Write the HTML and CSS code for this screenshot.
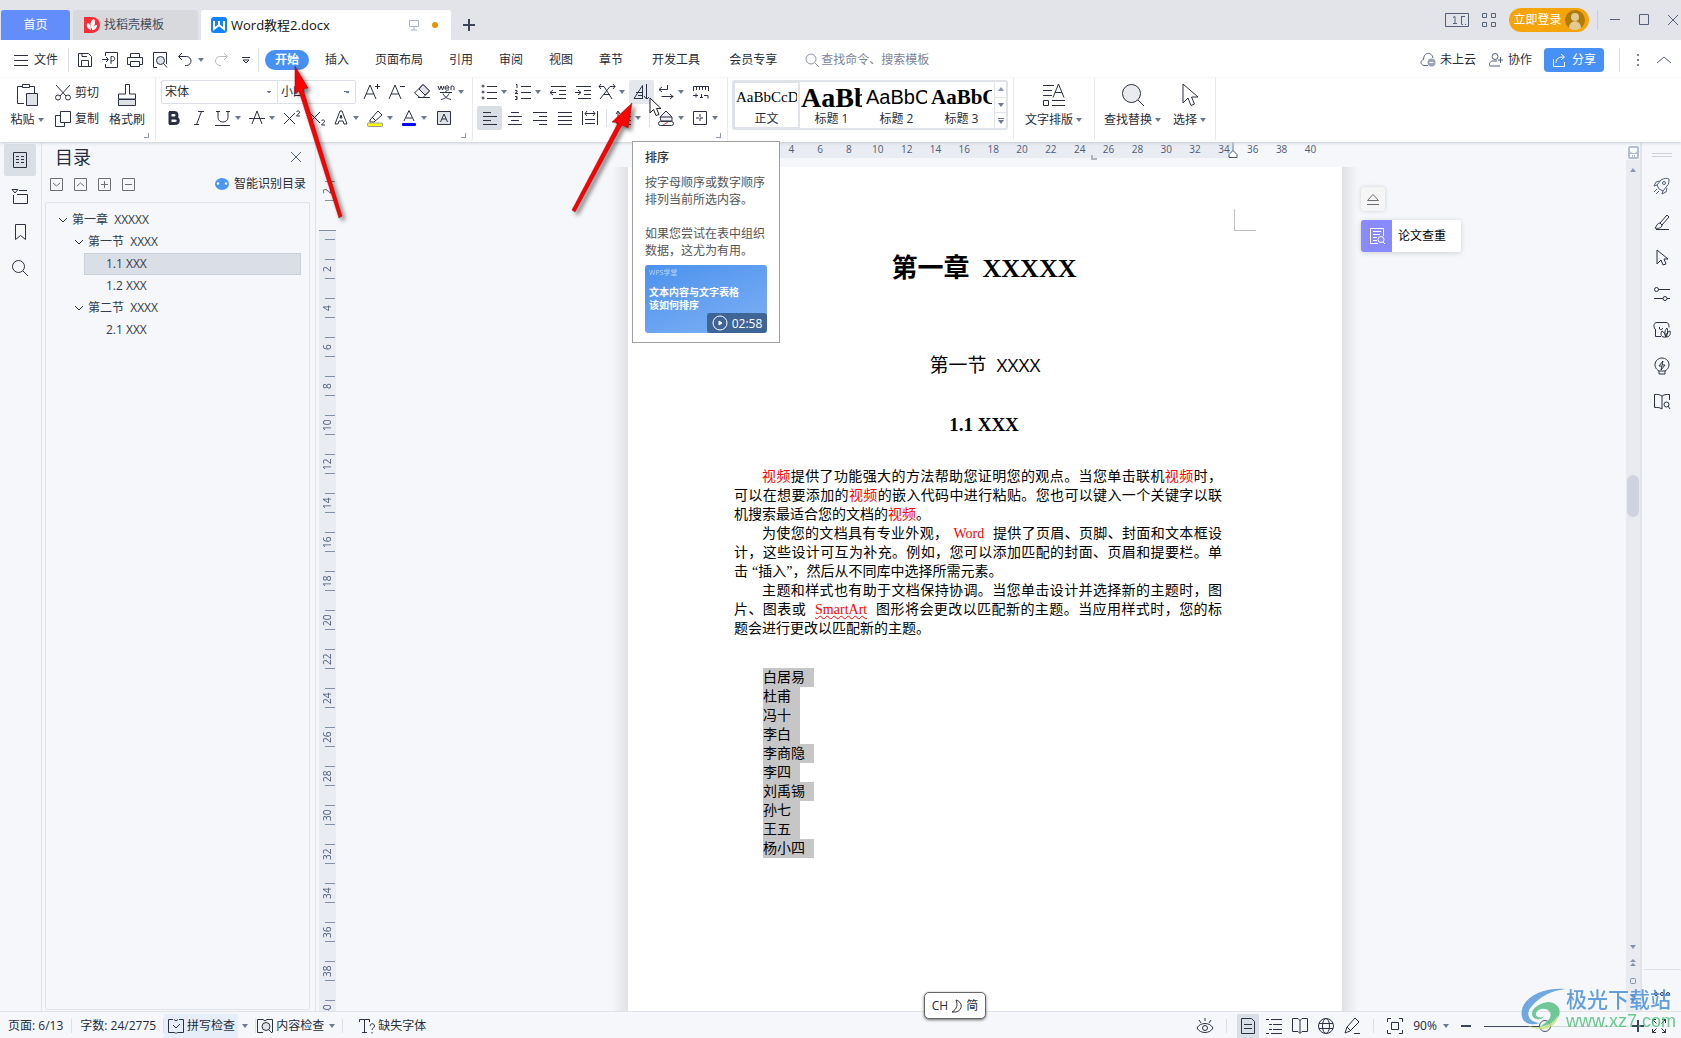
FILE: index.html
```html
<!DOCTYPE html>
<html lang="zh-CN">
<head>
<meta charset="utf-8">
<title>Word教程2.docx</title>
<link rel="stylesheet" href="styles.css">
</head>
<body>
<svg class="defs" aria-hidden="true">
  <symbol id="x2" viewBox="0 0 18 18"><path d="M1 4l11 11M12 4L1 15M13.500 3c1-2 3.500-1 3 .7L13.500 7H17"/></symbol>
  <symbol id="sub2" viewBox="0 0 18 18"><path d="M1 3l11 11M12 3L1 14M13.500 12c1-2 3.500-1 3 .7L13.500 16H17"/></symbol>
  <symbol id="cursor" viewBox="0 0 18 24"><path d="M2 1v19l5-5 3 7.500 3.500-1.500-3-7H17z"/></symbol>
</svg>

<header class="titlebar">
  <nav class="tabs">
    <button class="tab home">首页</button>
    <button class="tab docer"><svg width="16" height="16" viewBox="0 0 16 16"><path d="M0 0h8a8 8 0 010 16H0z" fill="#fa2c37"/><path d="M7 13C2 11 2 7 4 6c2 1 3 3 3 7zM8 12C5 7 7 3 10 2c2 3 1 7-2 10zM8 13c0-3 3-5 5-5 0 3-2 5-5 5z" fill="#fff"/></svg>找稻壳模板</button>
    <button class="tab doc"><svg width="16" height="16" viewBox="0 0 16 16"><rect width="16" height="16" rx="3" fill="#1483fb"/><path d="M3 4v8l5-4 5 4V4M8 4v4" fill="none" stroke="#fff" stroke-width="2"/></svg><span class="grow">Word教程2.docx</span>
      <svg class="ln pale" width="12" height="12"><path d="M1.500 1.500h9v6h-9zM6 8v3M3 11h6"/></svg><i class="dot"></i></button>
    <button class="plus" aria-label="新建"><svg class="ln thick" width="12" height="12"><path d="M6 0v12M0 6h12"/></svg></button>
  </nav>
  <div class="winctl">
    <button aria-label="分屏"><svg class="ln slate" width="24" height="14"><path d="M.5.500h23v13H.5zM16.500 3v8.500M17 3.500h3M17 11.500h1M20 11.500h1M8 4.500l2-1v7M8 10.500h4"/></svg></button>
    <button aria-label="应用"><svg class="ln slate" width="14" height="14"><path d="M.5.500h4v4h-4zM9.500.500h4v4h-4zM.5 9.500h4v4h-4zM9.500 9.500h4v4h-4z"/></svg></button>
    <button class="login">立即登录<svg width="20" height="20" viewBox="0 0 20 20"><circle cx="10" cy="10" r="10" fill="#b07b08"/><circle cx="10" cy="7" r="4" fill="#e2c891"/><path d="M4 18c0-9 12-9 12 0-4 3-8 3-12 0z" fill="#e2c891"/></svg></button>
    <i class="vsep"></i>
    <button aria-label="最小化"><svg class="ln slate" width="12" height="12"><path d="M1 5.500h10"/></svg></button>
    <button aria-label="最大化"><svg class="ln slate" width="12" height="12"><path d="M1.500.500h9v10h-9z"/></svg></button>
    <button aria-label="关闭"><svg class="ln slate" width="12" height="12"><path d="M1 1l10 10M11 1L1 11"/></svg></button>
  </div>
</header>

<nav class="menubar">
  <button class="file"><svg class="ln" width="14" height="12"><path d="M0 1.500h14M0 6.500h14M0 11.500h14"/></svg>文件</button>
  <i class="vsep"></i>
  <div class="quick">
    <button aria-label="保存"><svg class="ln" width="16" height="16"><path d="M1.500 1.500h10l3 3v10h-13zM4.500 14V8.500h7V14M5 1.500v3h5"/></svg></button>
    <button aria-label="输出PDF"><svg class="ln" width="16" height="16"><path d="M3.500 4V.500h12v15h-12V12M0 7.500h6M4 5l2.500 2.500L4 10M9 12V4.500c5-1 5 5 0 4.500"/></svg></button>
    <button aria-label="打印"><svg class="ln" width="16" height="16"><path d="M3.500 5V1.500h9V5M3 12.500H.5v-7h15v7H13M3.500 9.500h9v5h-9z"/></svg></button>
    <button aria-label="打印预览"><svg class="ln" width="16" height="16"><path d="M5 15.500H1.500V.500h13V12"/><circle cx="8.500" cy="8.500" r="4" fill="#dfe2e7"/><path d="M11.500 11.500l3.500 4"/></svg></button>
    <button class="dd" aria-label="撤销"><svg class="ln" width="16" height="16"><path d="M5 1L1.500 4.500 5 8M2 4.500h7.500a4.500 4.500 0 010 9H8"/></svg><i class="caret"></i></button>
    <button aria-label="恢复"><svg class="ln faint" width="16" height="16"><path d="M11 1l3.500 3.500L11 8M14 4.500H7a4.500 4.500 0 000 9h1"/></svg></button>
    <button aria-label="更多"><svg class="ln" width="8" height="8"><path d="M0 1.500h8M1 4l3 3 3-3z"/></svg></button>
  </div>
  <i class="vsep"></i>
  <div class="menus">
    <button class="on">开始</button><button>插入</button><button>页面布局</button><button>引用</button><button>审阅</button><button>视图</button><button>章节</button><button class="far">开发工具</button><button class="far">会员专享</button>
  </div>
  <label class="search"><svg class="ln" width="14" height="14"><circle cx="6" cy="6" r="5"/><path d="M10 10l4 4"/></svg><input type="text" placeholder="查找命令、搜索模板"></label>
  <div class="share">
    <button><svg class="ln slate" width="16" height="16"><path d="M8 13.500H4c-4-1-4-5-.500-6C4-1 12 0 13 6"/><circle cx="11.500" cy="10.500" r="4" fill="#9ca3b5" stroke="none"/><path d="M9.500 10.500h4" stroke="#fff"/></svg>未上云</button>
    <button><svg class="ln slate" width="16" height="16"><circle cx="7" cy="4.500" r="3"/><path d="M9 9H5c-4 0-4 5-3 5h10M12.500 5v6M10 8h5"/></svg>协作</button>
    <button class="blue"><svg class="ln" width="14" height="14"><path d="M1.500 6v7.500h11V9M4 10c0-5 3-6 8-6M9 1l3.500 3L9 7"/></svg>分享</button>
    <i class="vsep"></i>
    <button aria-label="更多"><svg width="3" height="14"><path d="M0 1h2v2H0zM0 6h2v2H0zM0 11h2v2H0z" fill="#7d8699"/></svg></button>
    <button aria-label="收起"><svg class="ln slate" width="14" height="10"><path d="M0 8l7-6 7 6"/></svg></button>
  </div>
</nav>

<section class="ribbon">
  <div class="group clip">
    <button class="tall paste"><svg class="ln" width="24" height="24"><path d="M7 3.500H2.500v17H9M15 3.500h4.500V10M7.500 1.500h7v3h-7z"/><path d="M11.500 10.500h11v12h-11z" fill="#dfe2e7"/></svg><span>粘贴<i class="caret"></i></span></button>
    <div class="rows">
      <button class="wide"><svg class="ln" width="16" height="16"><path d="M1 0l10 11M15 0L5 11"/><circle cx="3" cy="12.500" r="2.500"/><circle cx="13" cy="12.500" r="2.500"/></svg>剪切</button>
      <button class="wide"><svg class="ln" width="16" height="16"><path d="M5.500.500h10v11h-10zM5 4.500H.5v11h9V12"/></svg>复制</button>
    </div>
    <button class="tall brush"><svg class="ln" width="24" height="24"><path d="M10.500 1.500h4V11h6v5h-17v-5h7z"/><path d="M3.500 16.500h17v6h-17z" fill="#dfe2e7"/></svg><span>格式刷</span></button>
    <i class="corner"></i>
  </div>
  <div class="group fonts">
    <div class="rows">
      <div class="row">
        <div class="combo"><select class="font" aria-label="字体"><option>宋体</option></select><select class="size" aria-label="字号"><option>小四</option></select></div>
        <button aria-label="增大字号"><svg class="ln" width="18" height="18"><path d="M1 16L7 2 13 16M3 11h8M12 3.500h5M14.500 1v5"/></svg></button>
        <button aria-label="减小字号"><svg class="ln" width="18" height="18"><path d="M1 16L7 2 13 16M3 11h8M12 3.500h5"/></svg></button>
        <button aria-label="清除格式"><svg class="ln" width="18" height="18"><path d="M7 14.500L1.500 10 10 1.500 16.500 8 10 14.500zM5 14.500h12"/><path d="M6 6l6 6 4.500-4L10 1.500z" fill="#dfe2e7"/></svg></button>
        <button class="dd" aria-label="拼音指南"><svg class="ln" width="18" height="18"><path d="M1 3l1.500 4L4 3l1.500 4L7 3M8 5h4c0-3-4-3-4 0 0 2 2 3 4 1.500M14 7V3.500c1.500-1 3-.5 3 1V7M3 9.500h12M9 8v2M6 10.500c2 4 4 5 8 6M12 10.500c-2 4-4 5-8 6"/></svg><i class="caret"></i></button>
      </div>
      <div class="row">
        <button aria-label="加粗"><svg class="ln bold" width="18" height="18"><path d="M5 3v12M4 3.500h5c4 0 4 5.500 0 5.500H5h4.500c5 0 5 5.500 0 5.500H4"/></svg></button>
        <button aria-label="倾斜"><svg class="ln" width="18" height="18"><path d="M8 2.500h6M4 15.500h5M11.500 2.500l-5 13"/></svg></button>
        <button class="dd" aria-label="下划线"><svg class="ln" width="18" height="18"><path d="M2 2.500h4M12 2.500h4M4 2.500v6c0 6 10 6 10 0v-6M1 16.500h15"/></svg><i class="caret"></i></button>
        <button class="dd" aria-label="删除线"><svg class="ln" width="18" height="18"><path d="M4 15L9 2l5 13M1 9.500h16"/></svg><i class="caret"></i></button>
        <button aria-label="上标"><svg class="ln" width="18" height="18"><use href="#x2"/></svg></button>
        <button aria-label="下标"><svg class="ln" width="18" height="18"><use href="#sub2"/></svg></button>
        <button class="dd" aria-label="文字效果"><svg class="ln" width="18" height="18"><path d="M3 15L8 2h2l5 13h-3l-1-3H7l-1 3zM8 9l1-3 1 3z"/></svg><i class="caret"></i></button>
        <button class="dd" aria-label="突出显示"><svg class="ln" width="18" height="18"><path d="M4 11l8-9 4 4-8 7H4zM6 8l4 4"/><rect x="1.500" y="14" width="15" height="3.500" rx="1" fill="#ff0" stroke="#999"/></svg><i class="caret"></i></button>
        <button class="dd" aria-label="字体颜色"><svg class="ln" width="18" height="18"><path d="M4 12L9 1.500 14 12M6 9h6"/><rect x="2" y="14" width="14" height="3" rx="1" fill="#00f" stroke="none"/></svg><i class="caret"></i></button>
        <button aria-label="字符底纹"><svg class="ln" width="18" height="18"><path d="M2.500 2.500h13v13h-13z" fill="#dfe2e7"/><path d="M5.500 13L9 5l3.500 8M7 10h4"/></svg></button>
      </div>
    </div>
    <i class="corner"></i>
  </div>
  <div class="group para">
    <div class="rows">
      <div class="row">
        <button class="dd" aria-label="项目符号"><svg class="ln" width="18" height="18"><circle cx="3" cy="3" r="1"/><circle cx="3" cy="9" r="1"/><circle cx="3" cy="15" r="1"/><path d="M7 3.500h10M7 9.500h10M7 15.500h10"/></svg><i class="caret"></i></button>
        <button class="dd" aria-label="编号"><svg class="ln" width="18" height="18"><path d="M2 1.500h1V5M1 7.500h2v1.500l-2 1.500h3M1 13.500h2v3H1M2 15h1M7 3.500h10M7 9.500h10M7 15.500h10"/></svg><i class="caret"></i></button>
        <button aria-label="减少缩进"><svg class="ln" width="18" height="18"><path d="M2 3.500h15M10 7.500h7M10 11.500h7M4 15.500h13M1 9.500h6M4 7L1 9.500 4 12"/></svg></button>
        <button aria-label="增加缩进"><svg class="ln" width="18" height="18"><path d="M2 3.500h15M10 7.500h7M10 11.500h7M4 15.500h13M1 9.500h6M4 7l3 2.500L4 12"/></svg></button>
        <button class="dd" aria-label="中文版式"><svg class="ln" width="18" height="18"><path d="M1 3.500h5M12 3.500h5M3 1L1 3.500 3 6M15 1l2 2.500L15 6M6 3.500l8 12.500M12 3.500L2 16M6 11.500h6"/></svg><i class="caret"></i></button>
        <button class="lit" aria-label="排序"><svg class="ln" width="18" height="18"><path d="M1 15.500L9.500 2.500v13M3 9.500h6M1 15.500h9M5 12.500h5M13.500 1v15l-2.500-3M14 16l2-2"/></svg></button>
        <button class="dd" aria-label="显示标记"><svg class="ln" width="18" height="18"><path d="M10.500 2v4.500H2M5 4L2 6.500 5 9M4.500 13.500h12M13 11l3 2.500-3 2.500"/></svg><i class="caret"></i></button>
        <button aria-label="制表位"><svg class="ln" width="18" height="18"><path d="M1.500 8V3.500h15V8M4.500 4v3M7.500 4v3M10.500 4v3M13.500 4v3M1 12.500h5M4 10.500v4M8 14.500h3M9.500 11v3M12 12.500h4v3"/></svg></button>
      </div>
      <div class="row">
        <button class="lit2" aria-label="左对齐"><svg class="ln" width="18" height="18"><path d="M2 3.500h8M2 7.500h14M2 11.500h8M2 15.500h14"/></svg></button>
        <button aria-label="居中"><svg class="ln" width="18" height="18"><path d="M5 3.500h8M2 7.500h14M5 11.500h8M2 15.500h14"/></svg></button>
        <button aria-label="右对齐"><svg class="ln" width="18" height="18"><path d="M2 3.500h14M8 7.500h8M2 11.500h14M8 15.500h8"/></svg></button>
        <button aria-label="两端对齐"><svg class="ln" width="18" height="18"><path d="M2 3.500h14M2 7.500h14M2 11.500h14M2 15.500h14"/></svg></button>
        <button aria-label="分散对齐"><svg class="ln" width="18" height="18"><path d="M1.500 2v14M16.500 2v14M4 4.500h10M6 2L4 4.500 6 7M12 2l2 2.500L12 7M4 10.500h10M4 14.500h10"/></svg></button>
        <i class="mini"></i>
        <button class="dd" aria-label="行距"><svg class="ln" width="18" height="18"><path d="M4 3v13M2 5l2-3 2 3M2 13l2 3 2-3M8 3.500h9M8 7.500h9M8 11.500h9M8 15.500h9"/></svg><i class="caret"></i></button>
        <i class="mini"></i>
        <button class="dd" aria-label="底纹"><svg class="ln" width="18" height="18"><path d="M3 8l6-6 6 6v4H4zM3 8h12" fill="#eceef1"/><rect x="1.500" y="12.500" width="15" height="4" rx="2" fill="#fff"/><path d="M6 16l5-3" stroke="#e44"/></svg><i class="caret"></i></button>
        <button class="dd" aria-label="边框"><svg class="ln" width="18" height="18"><path d="M2.500 2.500h13v13h-13z"/><path d="M9 5v8M5 9h8" stroke-dasharray="3 1"/></svg><i class="caret"></i></button>
      </div>
    </div>
    <i class="corner"></i>
  </div>
  <div class="group gallery">
    <div class="styles">
      <button class="st sel"><b class="s0">AaBbCcDd</b><span>正文</span></button>
      <button class="st"><b class="s1">AaBb</b><span>标题 1</span></button>
      <button class="st"><b class="s2">AaBbC</b><span>标题 2</span></button>
      <button class="st"><b class="s3">AaBbC</b><span>标题 3</span></button>
      <div class="spin"><button aria-label="上"><i class="caret up"></i></button><button aria-label="下"><i class="caret"></i></button><button aria-label="展开"><i class="bar"></i><i class="caret"></i></button></div>
    </div>
  </div>
  <div class="group typeset">
    <button class="tall"><svg class="ln" width="24" height="24"><path d="M1 2.500h11M1 7.500h9M1 12.500h9M1.500 17.500h5v5h-5zM10 17.500h13M10 22.500h13M11 14.500L16.500 1 22 14.500M13 9.500h7"/></svg><span>文字排版<i class="caret"></i></span></button>
  </div>
  <div class="group find">
    <button class="tall"><svg class="ln" width="24" height="24"><circle cx="10.500" cy="10.500" r="9" fill="#e9ebee"/><path d="M17 17l6 6"/></svg><span>查找替换<i class="caret"></i></span></button>
    <button class="tall"><svg class="ln" width="18" height="24"><use href="#cursor"/></svg><span>选择<i class="caret"></i></span></button>
  </div>
</section>

<main class="body">
  <nav class="rail">
    <button class="on" aria-label="目录"><svg class="ln" width="16" height="18"><path d="M1.500 1.500h13v15h-13zM4 5.500h3M9 5.500h3M4 8.500h3M9 8.500h3M4 11.500h3M9 11.500h3"/></svg></button>
    <button aria-label="章节"><svg class="ln" width="18" height="18"><path d="M1 2.500h6L4 6zM8 3.500h8M2.500 8v8.500h14v-9H6"/></svg></button>
    <button aria-label="书签"><svg class="ln" width="16" height="18"><path d="M3.500 1.500h10v15l-5-4-5 4z"/></svg></button>
    <button aria-label="查找"><svg class="ln" width="18" height="18"><circle cx="7.500" cy="7.500" r="6"/><path d="M12 12l5 5"/></svg></button>
  </nav>
  <aside class="outline">
    <header><h2>目录</h2><button aria-label="关闭"><svg class="ln slate" width="10" height="10"><path d="M0 0l10 10M10 0L0 10"/></svg></button></header>
    <div class="tools">
      <button aria-label="展开"><svg class="ln grey" width="13" height="13"><path d="M.5.500h12v12H.5zM3 5l3.500 3L10 5"/></svg></button>
      <button aria-label="收起"><svg class="ln grey" width="13" height="13"><path d="M.5.500h12v12H.5zM3 8l3.500-3L10 8"/></svg></button>
      <button aria-label="加"><svg class="ln grey" width="13" height="13"><path d="M.5.500h12v12H.5zM3 6.500h7M6.500 3v7"/></svg></button>
      <button aria-label="减"><svg class="ln grey" width="13" height="13"><path d="M.5.500h12v12H.5zM3 6.500h7"/></svg></button>
      <button class="smart"><svg width="14" height="12"><ellipse cx="7" cy="6" rx="7" ry="6" fill="#4a96f3"/><path d="M2 6l2-1M10 5l2 1" stroke="#fff" stroke-width="2"/></svg>智能识别目录</button>
    </div>
    <ul class="tree">
      <li><svg class="ln" width="10" height="10"><path d="M1 3l4 4 4-4"/></svg>第一章&nbsp; XXXXX</li>
      <li class="l2"><svg class="ln" width="10" height="10"><path d="M1 3l4 4 4-4"/></svg>第一节&nbsp; XXXX</li>
      <li class="l3 on">1.1 XXX</li>
      <li class="l3">1.2 XXX</li>
      <li class="l2"><svg class="ln" width="10" height="10"><path d="M1 3l4 4 4-4"/></svg>第二节&nbsp; XXXX</li>
      <li class="l3">2.1 XXX</li>
    </ul>
  </aside>

  <section class="work">
    <div class="vruler">
      <div class="vtop"><span class="cell top">2</span></div>
      <div class="vnum"><span class="cell">2</span><span class="cell">4</span><span class="cell">6</span><span class="cell">8</span><span class="cell">10</span><span class="cell">12</span><span class="cell">14</span><span class="cell">16</span><span class="cell">18</span><span class="cell">20</span><span class="cell">22</span><span class="cell">24</span><span class="cell">26</span><span class="cell">28</span><span class="cell">30</span><span class="cell">32</span><span class="cell">34</span><span class="cell">36</span><span class="cell">38</span><span class="cell">40</span></div>
    </div>
    <div class="canvas">
      <div class="sheet">
        <div class="hruler">
          <div class="nums"><span>2</span><span>4</span><span>6</span><span>8</span><span>10</span><span>12</span><span>14</span><span>16</span><span>18</span><span>20</span><span>22</span><span>24</span><span>26</span><span>28</span><span>30</span><span>32</span><span>34</span><span>36</span><span>38</span><span>40</span></div>
          <i class="stop"></i>
          <svg class="indent" width="10" height="17"><path d="M5 0v9" stroke="#6f7c93"/><path d="M1 15.500v-3l4-4 4 4v3z" fill="#fff" stroke="#4c586d"/></svg>
        </div>
        <article class="page">
          <i class="crop"></i>
          <h1>第一章&nbsp; XXXXX</h1>
          <h2>第一节&nbsp; XXXX</h2>
          <h3>1.1 XXX</h3>
          <p><em>视频</em>提供了功能强大的方法帮助您证明您的观点。当您单击联机<em>视频</em>时，可以在想要添加的<em>视频</em>的嵌入代码中进行粘贴。您也可以键入一个关键字以联机搜索最适合您的文档的<em>视频</em>。</p>
          <p>为使您的文档具有专业外观，<em class="lat">Word</em> 提供了页眉、页脚、封面和文本框设计，这些设计可互为补充。例如，您可以添加匹配的封面、页眉和提要栏。单击<span class="open">“</span>插入”，然后从不同库中选择所需元素。</p>
          <p>主题和样式也有助于文档保持协调。当您单击设计并选择新的主题时，图片、图表或 <em class="lat typo">SmartArt</em> 图形将会更改以匹配新的主题。当应用样式时，您的标题会进行更改以匹配新的主题。</p>
          <ul class="names"><li>白居易</li><li>杜甫</li><li>冯十</li><li>李白</li><li>李商隐</li><li>李四</li><li>刘禹锡</li><li>孙七</li><li>王五</li><li>杨小四</li></ul>
        </article>
        <div class="float">
          <button class="eject" aria-label="收起"><svg class="ln grey" width="14" height="14"><path d="M1.500 8.500L7 2.500l5.500 6zM1 12.500h12"/></svg></button>
          <button class="check"><i><svg width="18" height="18" fill="none" stroke="#fff"><path d="M10 16.500H2.500v-15h13V9M5 4.500h8M5 7.500h7M5 10.500h4M5 13.500h4"/><circle cx="13" cy="12.500" r="3"/><path d="M15 15l2 2"/></svg></i><span>论文查重</span></button>
        </div>
      </div>
    </div>
    <div class="scroll">
      <svg class="toggle" width="11" height="13"><rect width="11" height="13" rx="2" fill="#b4bfd4"/><path d="M2 2h7v3L7 7H4L2 5zM2 8h7v3H7V9H6v2H5V9H4v2H2z" fill="#fff"/></svg>
      <div class="track"><i class="caret up"></i><div class="lane"><i class="thumb"></i></div><i class="caret"></i>
        <svg width="8" height="8"><path d="M4 0l3 3H1zM4 4l3 3H1z" fill="#8391ab"/></svg>
        <svg width="8" height="8"><rect x="1.500" y="1.500" width="5" height="5" rx="1" fill="none" stroke="#8391ab"/></svg>
        <svg width="8" height="8"><path d="M1 0h6L4 3zM1 4h6L4 7z" fill="#8391ab"/></svg></div>
    </div>
  </section>

  <nav class="rail right">
    <i class="grip"></i>
    <button aria-label="助手"><svg class="ln slate" width="18" height="18"><path d="M6 12L4 8l4-5c3-2 6-2 8-1 0 3 0 5-2 7l-4 5zM4 8L1 9l2-4 4-1M10 14l-1 3 4-2 1-4M4 12l-3 3M6 14l-3 3"/><circle cx="11" cy="6" r="1.500"/></svg></button>
    <button aria-label="样式"><svg class="ln" width="18" height="18"><path d="M7 10l7-8 2 2-7 8zM7 10c-3 0-3 3-5 5 3 1 7 0 7-3M3 16.500h13"/></svg></button>
    <button aria-label="选择"><svg class="ln" width="14" height="18"><path d="M2 1v14l4-4 2 5 3-1-2-5h4z"/></svg></button>
    <button aria-label="设置"><svg class="ln" width="18" height="18"><circle cx="3.500" cy="4.500" r="2"/><path d="M5.500 4.500H17M1 13.500h9M14 13.500h3"/><circle cx="12" cy="13.500" r="2"/></svg></button>
    <button aria-label="稻壳"><svg class="ln" width="18" height="18"><path d="M2.500 8v7.500H8M2 8C0 5 1 1.500 4 1.500h9c3 0 3 3 3 5M6.500 8V6M6.500 8c1 1 3 1 3-1"/><path d="M13 16c-5 1-6-3-4-6 2 1 3 3 4 6zM13 16c-2-4-1-7 1-9 1 3 1 6-1 9zM13 16c0-3 1-5 4-6 1 4-1 6-4 6z"/></svg></button>
    <button aria-label="推荐"><svg class="ln" width="18" height="18"><path d="M6 14C-1 10 2 1 9 1s10 9 3 13v3H6zM6 14h6M10 4L6 9h3l-1 4 4-5H9z"/></svg></button>
    <button aria-label="阅读"><svg class="ln" width="18" height="18"><path d="M9 3C6 1 4 1.500 1.500 1.500v13C4 14.500 6 14 9 16V3c3-2 5-1.500 7.500-1.500V7"/><circle cx="13.500" cy="11.500" r="2.500"/><path d="M15 13l2 3"/></svg></button>
    <button class="more" aria-label="更多"><svg class="ln" width="16" height="6"><circle cx="2" cy="3" r="1.500"/><circle cx="8" cy="3" r="1.500"/><circle cx="14" cy="3" r="1.500"/></svg></button>
  </nav>
</main>

<footer class="status">
  <span>页面: 6/13</span><i class="vsep first"></i><span>字数: 24/2775</span><i class="vsep tight"></i>
  <button class="spell"><svg class="ln" width="16" height="16"><path d="M5 1.500H.5v13H6c1 0 2 1 2 1s1-1 2-1h5.500v-13H11M6 1.500L8 3l2-1.500M5 7l3 3 4-4"/></svg>拼写检查</button><i class="caret"></i><i class="vsep"></i>
  <button class="content"><svg class="ln" width="16" height="16"><path d="M6 14.500H.5v-13H6l2 1.500 2-1.500h5.500v13"/><circle cx="9" cy="8.500" r="4" fill="#dfe2e7"/><path d="M12 12l3 3"/></svg>内容检查</button><i class="caret"></i><i class="vsep"></i>
  <button class="missing"><svg class="ln" width="16" height="16"><path d="M.5 4V1.500h10V4M5.500 2v12M3 14.500h5M11 8c0-3 4.500-3 4.500 0 0 2-2.500 2-2.500 4M13 14v1.500"/></svg>缺失字体</button>
  <div class="view">
    <button aria-label="护眼"><svg class="ln" width="18" height="18"><path d="M1 11c3-6 13-6 16 0-3 6-13 6-16 0zM9 1v3M3 3l2 3M15 3l-2 3"/><circle cx="9" cy="11" r="2.500"/></svg></button>
    <i class="vsep"></i>
    <button class="on" aria-label="页面视图"><svg class="ln" width="16" height="18"><path d="M1.500 1.500h10l3 3v12h-13zM4 7.500h8M4 11.500h8"/></svg></button>
    <button aria-label="大纲"><svg class="ln" width="18" height="18"><path d="M1 2.500h3M6 2.500h11M4 7.500h3M8 7.500h9M4 12.500h3M8 12.500h9M1 16.500h3M6 16.500h11"/></svg></button>
    <button aria-label="阅读版式"><svg class="ln" width="18" height="18"><path d="M9 3.500L7 1.500H1.500v13H7l2 2 2-2h5.500v-13H11zM9 3v13"/></svg></button>
    <button aria-label="Web版式"><svg class="ln" width="18" height="18"><circle cx="9" cy="9" r="7.500"/><ellipse cx="9" cy="9" rx="3.500" ry="7.500"/><path d="M2 6.500h14M2 11.500h14"/></svg></button>
    <button aria-label="写作模式"><svg class="ln" width="18" height="18"><path d="M2 16l2-6 8-9 4 4-9 9zM4 10l4 4M11 16.500h6"/></svg></button>
    <i class="vsep"></i>
    <button aria-label="适应"><svg class="ln" width="16" height="16"><path d="M.5 4V.500H4M12 .500h3.500V4M.5 12v3.500H4M12 15.500h3.500V12M4.500 4.500h7v7h-7z"/></svg></button>
    <button class="pct">90%<i class="caret"></i></button>
    <button class="minus" aria-label="缩小"><svg class="ln thick" width="10" height="12"><path d="M0 6h10"/></svg></button>
    <input class="zoom" type="range" min="0" max="100" value="42" aria-label="缩放">
    <button class="add" aria-label="放大"><svg class="ln thick" width="12" height="12"><path d="M6 0v12M0 6h12"/></svg></button>
    <button aria-label="全屏"><svg class="ln" width="16" height="16"><path d="M1.500 5V1.500H5M1.500 1.500l4 4M11 1.500h3.500V5M14.500 1.500l-4 4M1.500 11v3.500H5M1.500 14.500l4-4M14.500 11v3.500H11M14.500 14.500l-4-4"/></svg></button>
  </div>
</footer>

<aside class="tip">
  <strong>排序</strong>
  <p>按字母顺序或数字顺序<br>排列当前所选内容。</p>
  <p>如果您尝试在表中组织<br>数据，这尤为有用。</p>
  <div class="thumbnail"><small>WPS学堂</small><b>文本内容与文字表格<br>该如何排序</b><span><svg width="16" height="16" fill="none" stroke="#fff"><circle cx="8" cy="8" r="7"/><path d="M7 6v4l3-2z" fill="#fff"/></svg>02:58</span></div>
</aside>

<svg class="arrows" width="420" height="180" aria-hidden="true">
  <defs><filter id="sh" x="-20%" y="-20%" width="150%" height="150%"><feDropShadow dx="3" dy="3" stdDeviation="2" flood-opacity="0.500"/></filter></defs>
  <g fill="#f00" stroke="#8a1010" stroke-width=".5" filter="url(#sh)">
    <path d="M35 6L48 28l-5 1 39 127-3 2L39 31l-4 3z"/>
    <path d="M372 43l-20 19 6 1-46 87 3 2 47-87 6 3z"/>
  </g>
</svg>
<svg class="pointer" width="14" height="20" aria-hidden="true"><path d="M1 1v15l3.500-3.500 2.500 6 3-1-2.500-6H12z" fill="#fff" stroke="#222"/></svg>
<div class="ime">CH<svg width="12" height="14" fill="none" stroke="#333"><path d="M5 1c7 2 7 10 0 12H1c5-3 6-7 4-12z"/></svg>简</div>
<div class="mark">
  <svg width="46" height="42" viewBox="0 0 46 42"><path d="M45 1C20-1-2 12 2 29c2 7 10 9 18 6C8 34 5 25 12 18 20 8 32 3 45 1z" fill="#5a9bdc"/><path d="M28 14c16 1 18 21-9 25 10-5 15-12 9-17-5-3-13 0-12 5 1 3 6 3 8 1-2 5-12 4-12-2 0-7 9-11 16-12z" fill="#59c089"/><path d="M6 37c12 5 26 2 32-10-1 14-18 18-32 10z" fill="#c9e27a"/></svg>
  <div><b>极光下载站</b><span>www.xz7.com</span></div>
</div>
</body>
</html>
```
FILE: styles.css
```css
* { box-sizing: border-box; }
html, body { height: 100%; }
body {
  margin: 0; display: flex; flex-direction: column; overflow: hidden; position: relative;
  font: 12px/16px "Open Sans", "Noto Sans CJK SC", sans-serif; color: #262c3a; background: #f5f7fa;
}
button { font: inherit; color: inherit; background: none; border: 0; padding: 0; display: flex; align-items: center; justify-content: center; white-space: nowrap; flex: none; }
svg { flex: none; display: block; }
i, em { font-style: normal; }
h1, h2, h3, p, ul { margin: 0; padding: 0; }
ul { list-style: none; }
.defs { position: absolute; width: 0; height: 0; }
.ln { fill: none; stroke: #2b3142; stroke-width: 1; }
.ln.slate { stroke: #55617a; }
.ln.grey { stroke: #6f6f73; }
.ln.pale { stroke: #aab4cc; }
.ln.faint { stroke: #b9bcc4; }
.ln.thick { stroke-width: 2; stroke: #3b465c; }
.ln.bold { stroke-width: 3; }
.vsep { width: 1px; height: 24px; background: #dcdfe5; flex: none; }
.caret { width: 0; height: 0; border: 3px solid transparent; border-top: 4px solid #6d7991; border-bottom: 0; flex: none; }
.caret.up { border-top: 0; border-bottom: 4px solid #8b97b0; }

.titlebar { height: 40px; background: #e2e4e9; display: flex; justify-content: space-between; flex: none; }
.tabs { display: flex; align-items: flex-end; gap: 3px; padding-left: 1px; }
.tab { height: 30px; border-radius: 3px 3px 0 0; justify-content: flex-start; gap: 4px; }
.home { width: 69px; background: #638dfa; color: #fff; justify-content: center; }
.docer { width: 125px; background: #d7d9dd; color: #464b57; padding-left: 11px; }
.doc { width: 250px; background: #fff; color: #111; padding: 0 13px 0 10px; font-size: 13px; }
.grow { flex: 1; text-align: left; }
.dot { width: 6px; height: 6px; border-radius: 50%; background: #e69500; margin-left: 8px; }
.plus { width: 30px; height: 30px; }
.winctl { display: flex; align-items: center; gap: 13px; padding-right: 2px; }
.winctl .vsep { height: 20px; background: #c9ccd3; margin-right: -2px; margin-left: -5px; }
.winctl > button:nth-of-type(n+5) { margin-left: 4px; }
.login { height: 24px; width: 80px; border-radius: 12px; background: #f5a50a; color: #fff; gap: 3px; }

.menubar { height: 38px; background: #fff; display: flex; align-items: center; flex: none; padding-top: 2px; }
.file { gap: 6px; margin: 0 10px 0 14px; }
.quick { display: flex; align-items: center; gap: 9px; margin: 0 8px 0 8px; }
.quick .dd { gap: 5px; }
.quick button:last-child { margin-left: 4px; }
.menus { display: flex; gap: 26px; margin-left: 6px; }
.menus button { height: 20px; }
.menus .on { background: #4790f5; color: #fff; font-weight: 700; width: 44px; border-radius: 10px; margin-right: -10px; }
.menus .far { margin-left: 3px; }
.search { display: flex; align-items: center; gap: 2px; margin-left: 28px; flex: 1; }
.search .ln { stroke: #8d97ad; }
.search input { border: 0; outline: 0; background: none; font: inherit; width: 130px; padding: 0; }
.search input::placeholder { color: #7b8499; opacity: 1; }
.share { display: flex; align-items: center; gap: 12px; padding-right: 10px; }
.share button { gap: 4px; }
.share .blue { background: #4790f5; color: #fff; height: 24px; width: 60px; border-radius: 4px; gap: 6px; }
.blue .ln { stroke: #fff; }
.share .vsep { margin: 0 5px 0 3px; }
.share button:last-child { margin-left: 5px; }

.ribbon { height: 64px; background: #fff; display: flex; flex: none; z-index: 1; box-shadow: 0 1px 3px #c9ccd2; }
.group { display: flex; padding: 2px 5px 0; position: relative; border-right: 1px solid #e8eaed; margin-bottom: 2px; }
.clip { width: 156px; padding-left: 5px; }
.fonts { width: 317px; }
.para { width: 255px; padding-left: 4px; }
.tall { flex-direction: column; justify-content: flex-start; height: 50px; gap: 5px; padding-top: 3px; }
.tall svg { height: 24px; }
.tall span { display: flex; align-items: center; gap: 3px; }
.paste { width: 44px; }
.clip .rows { margin: 0 10px 0 6px; padding-top: 1px; }
.wide { height: 24px; gap: 4px; }
.rows { display: flex; flex-direction: column; gap: 2px; }
.row { display: flex; height: 24px; }
.row button { width: 25px; height: 24px; border-radius: 2px; }
.row .dd { width: 34px; justify-content: flex-start; padding-left: 3px; gap: 3px; }
.row .lit { background: #e4e7ec; }
.row .lit2 { background: #dadee5; }
.mini { width: 1px; height: 18px; margin: 3px 4px; background: #dcdfe5; }
.combo { width: 195px; border: 1px solid #dcdfe5; border-radius: 2px; display: flex; margin-right: 3px; }
.combo select {
  appearance: none; border: 0; outline: 0; font: inherit; color: inherit; padding: 0 3px;
  background: linear-gradient(45deg, transparent 50%, #6d7991 50%) no-repeat right 8px center / 3px 3px,
    linear-gradient(-45deg, transparent 50%, #6d7991 50%) no-repeat right 5px center / 3px 3px;
}
.font { width: 115px; }
.combo .size { flex: 1; border-left: 1px solid #dcdfe5; }
.corner { position: absolute; right: 6px; bottom: 2px; width: 5px; height: 5px; border: solid #8d97ad; border-width: 0 1px 1px 0; }
.gallery { padding: 2px 5px 0 4px; width: 286px; }
.styles { display: flex; width: 276px; height: 50px; border: 2px solid #e0e3e8; border-radius: 3px; }
.st { flex-direction: column; width: 65px; overflow: hidden; justify-content: flex-end; padding: 0 2px; }
.st b { height: 26px; line-height: 26px; font-weight: 400; color: #000; width: 61px; overflow: hidden; text-align: left; }
.st span { height: 18px; line-height: 18px; }
.sel { outline: 2px solid #dfe2e8; outline-offset: -1px; }
.s0 { font-family: "Liberation Serif", serif; font-size: 15px; }
.st .s1 { font: 700 28px/28px "Liberation Serif", serif; }
.st .s2 { font: 400 20px/26px "Liberation Sans", sans-serif; }
.st .s3 { font: 700 21px/26px "Liberation Serif", serif; }
.spin { flex: 1; display: flex; flex-direction: column; border-left: 1px solid #e0e3e8; }
.spin button { flex: 1; flex-direction: column; gap: 1px; border-bottom: 1px solid #e0e3e8; }
.spin button:last-child { border: 0; }
.bar { width: 6px; height: 1px; background: #6d7991; }
.typeset { width: 81px; padding-left: 11px; }
.find { width: 121px; padding-left: 9px; gap: 12px; }

.body { flex: 1; display: flex; min-height: 0; }
.rail { width: 42px; border-right: 1px solid #dfe2e8; display: flex; flex-direction: column; align-items: center; gap: 4px; padding: 2px 2px 0 0; flex: none; }
.rail button { width: 32px; height: 32px; border-radius: 2px; }
.rail .on { background: #dadee5; }
.outline { width: 274px; border-right: 1px solid #dfe2e8; display: flex; flex-direction: column; flex: none; padding: 0 5px 1px 3px; }
.outline header { display: flex; justify-content: space-between; align-items: center; height: 30px; padding: 0 9px 0 10px; }
.outline h2 { font-size: 18px; line-height: 24px; font-weight: 400; }
.tools { display: flex; align-items: center; gap: 11px; height: 24px; padding: 0 4px 0 5px; }
.smart { gap: 5px; margin-left: auto; }
.tree { flex: 1; margin-top: 6px; border: 1px solid #dfe2e8; border-radius: 2px; padding: 6px 8px 0; }
.tree li { height: 22px; display: flex; align-items: center; gap: 4px; padding-left: 4px; color: #333a49; }
.tree .l2 { padding-left: 20px; }
.tree .l3 { margin-left: 30px; padding-left: 22px; }
.tree .on { background: #dadee6; outline: 1px solid #c9d0d9; outline-offset: -1px; }

.work { flex: 1; display: flex; min-width: 0; }
.vruler { width: 17px; margin-left: 3px; flex: none; overflow: hidden; font-size: 10px; line-height: 16px; color: #4c5a75; display: flex; flex-direction: column; }
.vtop { height: 89px; border-bottom: 1px solid #8290a8; padding-top: 39px; flex: none; }
.vnum { flex: 1; background: #e9ecf2; padding-top: 28px; min-height: 0; overflow: hidden; background-image: linear-gradient(#8290a8, #8290a8); background-size: 10px 1px; background-position: 6px 8px; background-repeat: no-repeat; }
.cell { display: flex; height: 20px; width: 16px; align-items: center; justify-content: center; writing-mode: vertical-rl; transform: rotate(180deg); border: solid #8290a8; border-width: 1px 0; margin-bottom: 19px; border-image: linear-gradient(90deg, #8290a8 10px, transparent 10px) 1; line-height: 12px; }
.canvas { flex: 1; display: flex; justify-content: center; padding-left: 8px; min-width: 0; overflow: hidden; }
.sheet { width: 714px; flex: none; position: relative; display: flex; flex-direction: column; }
.hruler { height: 25px; flex: none; position: relative; background: linear-gradient(#e9ecf2, #e9ecf2) no-repeat 107px 0 / 498px 16px; }
.nums { display: flex; margin-left: 120px; width: 577px; font-size: 10px; line-height: 15px; color: #4c5a75; }
.nums span { flex: 1; text-align: center; }
.stop { position: absolute; left: 463px; top: 13px; width: 6px; height: 5px; border: solid #b0b4bd; border-width: 0 0 2px 2px; }
.indent { position: absolute; left: 600px; top: 0; }
.page {
  flex: 1; min-height: 0; background: #fff; padding: 85px 120px 0 106px; position: relative; color: #000;
  font: 14px/19px "Liberation Serif", "Noto Sans CJK SC", serif;
}
.page::before, .page::after { content: ""; position: absolute; top: 0; bottom: 0; width: 16px; }
.page::before { right: 100%; background: linear-gradient(270deg, #dfe1e4, #f5f7fa); }
.page::after { left: 100%; background: linear-gradient(90deg, #dfe1e4, #f5f7fa); }
.page h1 { font-size: 26px; line-height: 34px; text-align: center; margin-right: -12px; }
.page h1, .page h3 { font-weight: 700; }
.page h2 { font: 400 19px/24px "Open Sans", "Noto Sans CJK SC", sans-serif; text-align: center; margin: 67px -14px 36px 0; }
.page h3 { font-size: 19px; line-height: 24px; text-align: center; margin: 0 -12px 30px 0; }
.page p { text-align: justify; text-indent: 2em; }
.page em { color: #f00; }
.lat { margin: 0 5px; }
.page .open { margin-left: 4px; }
.typo { text-decoration: underline wavy #f00 1px; }
.names { margin: 30px 0 0 29px; }
.names li { width: 37px; background: #c6c6c6; }
.names li:nth-child(1), .names li:nth-child(5), .names li:nth-child(7), .names li:nth-child(10) { width: 51px; }
.crop { position: absolute; left: 606px; top: 42px; width: 22px; height: 22px; border: solid #bfc1c5; border-width: 0 0 1px 1px; }
.float { position: absolute; left: 733px; top: 45px; display: flex; flex-direction: column; gap: 9px; align-items: flex-start; }
.eject { width: 24px; height: 24px; border-radius: 3px; background: #f5f5f6; box-shadow: 0 0 4px #cfd1d6; }
.check { width: 100px; height: 32px; background: #fff; border-radius: 3px; overflow: hidden; box-shadow: 0 1px 5px #cfd1d6; justify-content: flex-start; gap: 6px; color: #000; }
.check i { width: 31px; height: 32px; background: #8a8aff; display: grid; place-items: center; }
.scroll { width: 16px; flex: none; display: flex; flex-direction: column; align-items: center; padding-top: 4px; border-right: 2px solid #e0e3ea; }
.track { width: 14px; background: #e9ebf1; flex: 1; margin-top: 1px; display: flex; flex-direction: column; align-items: center; padding: 8px 0 8px; gap: 10px; }
.lane { flex: 1; display: flex; flex-direction: column; }
.lane::before { content: ""; flex: 293; }
.lane::after { content: ""; flex: 418; }
.thumb { width: 12px; height: 42px; border-radius: 6px; background: #ced3de; }
.track .caret { border-top-color: #8391ab; }
.rail.right { width: 39px; border: 0; padding: 11px 0 14px 1px; }
.grip { width: 20px; height: 4px; border: solid #cdd0d6; border-width: 1px 0; margin-bottom: 9px; }
.rail .more { margin-top: auto; width: 38px; border-top: 1px solid #dfe2e8; height: 28px; align-items: flex-end; }

.status { height: 27px; border-top: 1px solid #dfe2e8; flex: none; display: flex; align-items: center; padding: 2px 11px 0 8px; gap: 7px; }
.status .vsep { height: 14px; }
.status .first { margin: 0 1px; }
.status button { gap: 3px; height: 24px; }
.status .tight { margin-right: -7px; }
.spell { background: #e5eef9; padding: 0 3px 0 4px; margin-right: -3px; }
.content { margin-left: -6px; margin-right: -2px; }
.missing { margin-left: 9px; }
.view { margin-left: auto; display: flex; align-items: center; gap: 4px; }
.view button { width: 22px; }
.view .vsep { margin: 0 6px; }
.view .on { background: #dadee5; }
.view .pct { width: 36px; gap: 6px; margin: 0 2px 0 3px; }
.view .minus { margin-right: 3px; }
.view .add { width: 12px; }
.zoom { appearance: none; width: 144px; height: 16px; margin: 0; background: linear-gradient(90deg, #3b465c 60px, #cfd3da 60px) no-repeat 0 8px / 100% 1px; }
.zoom::-webkit-slider-thumb { appearance: none; width: 12px; height: 12px; border: 1px solid #4c586d; border-radius: 50%; background: #f0f3ee; }

.tip { position: absolute; left: 632px; top: 141px; width: 148px; height: 202px; border: 1px solid #a0a0a0; background: #fff; z-index: 2; padding: 7px 12px; color: #555; line-height: 17px; }
.tip strong { font-weight: 500; color: #333; display: block; }
.tip p { margin: 8px 0 17px; white-space: nowrap; }
.tip p + p { margin: 17px 0 6px; }
.thumbnail { height: 68px; border-radius: 3px; background: linear-gradient(160deg, #4b92ee, #7fb0f4); overflow: hidden; position: relative; color: #fff; padding: 2px 4px; display: flex; flex-direction: column; }
.thumbnail small { font-size: 7px; line-height: 11px; opacity: .6; }
.thumbnail b { font-size: 10px; line-height: 13px; margin-top: 8px; white-space: nowrap; }
.thumbnail span { position: absolute; right: 0; bottom: 0; width: 60px; height: 20px; background: #3f6496; border-radius: 3px; display: flex; align-items: center; justify-content: center; gap: 4px; }
.arrows { position: absolute; left: 260px; top: 60px; z-index: 3; pointer-events: none; }
.pointer { position: absolute; left: 649px; top: 97px; z-index: 4; }
.ime { position: absolute; left: 924px; bottom: 19px; width: 62px; height: 27px; border: 1px solid #666; border-radius: 5px; background: #fff; box-shadow: 0 1px 3px #666; display: flex; align-items: center; justify-content: center; gap: 3px; }
.mark { position: absolute; right: 5px; bottom: 7px; display: flex; align-items: center; opacity: .85; pointer-events: none; }
.mark div { display: flex; flex-direction: column; }
.mark b { font-size: 21px; line-height: 24px; font-weight: 500; color: #4a90d9; }
.mark span { font: 400 18px/20px "Liberation Sans", sans-serif; color: #50c27c; }
```
